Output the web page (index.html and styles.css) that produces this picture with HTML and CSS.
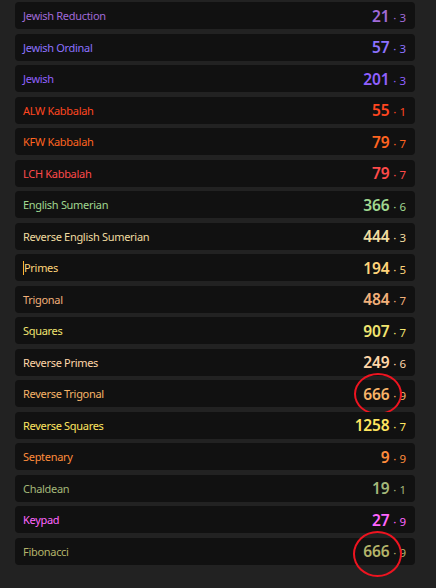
FILE: index.html
```html
<!DOCTYPE html>
<html lang="en">
<head>
    <meta charset="UTF-8">
    <meta name="viewport" content="width=device-width, initial-scale=1.0">
    <title>Ciphers</title>
    <link rel="stylesheet" href="styles.css">
</head>
<body>
    <div class="ciphers">
        <div class="row c-jred"><span class="name">Jewish Reduction</span><span class="val">21<small>· 3</small></span></div>
        <div class="row c-jord"><span class="name">Jewish Ordinal</span><span class="val">57<small>· 3</small></span></div>
        <div class="row c-jew"><span class="name">Jewish</span><span class="val">201<small>· 3</small></span></div>
        <div class="row c-alw"><span class="name">ALW Kabbalah</span><span class="val">55<small>· 1</small></span></div>
        <div class="row c-kfw"><span class="name">KFW Kabbalah</span><span class="val">79<small>· 7</small></span></div>
        <div class="row c-lch"><span class="name">LCH Kabbalah</span><span class="val">79<small>· 7</small></span></div>
        <div class="row c-es"><span class="name">English Sumerian</span><span class="val">366<small>· 6</small></span></div>
        <div class="row c-res"><span class="name">Reverse English Sumerian</span><span class="val">444<small>· 3</small></span></div>
        <div class="row c-pri"><span class="name"><span class="caret"></span>Primes</span><span class="val">194<small>· 5</small></span></div>
        <div class="row c-tri"><span class="name">Trigonal</span><span class="val">484<small>· 7</small></span></div>
        <div class="row c-sq"><span class="name">Squares</span><span class="val">907<small>· 7</small></span></div>
        <div class="row c-rpri"><span class="name">Reverse Primes</span><span class="val">249<small>· 6</small></span></div>
        <div class="row c-rtri"><span class="name">Reverse Trigonal</span><span class="val">666<small>· 9</small></span><span class="mark"></span></div>
        <div class="row c-rsq"><span class="name">Reverse Squares</span><span class="val">1258<small>· 7</small></span></div>
        <div class="row c-sep"><span class="name">Septenary</span><span class="val">9<small>· 9</small></span></div>
        <div class="row c-cha"><span class="name">Chaldean</span><span class="val">19<small>· 1</small></span></div>
        <div class="row c-key"><span class="name">Keypad</span><span class="val">27<small>· 9</small></span></div>
        <div class="row c-fib"><span class="name">Fibonacci</span><span class="val">666<small>· 9</small></span><span class="mark"></span></div>
    </div>
</body>
</html>
```
FILE: styles.css
```css
html, body {
    margin: 0;
    background: #222222;
}

body {
    font-family: "Noto Sans", "Open Sans", sans-serif;
    height: 588px;
    overflow: hidden;
}

.ciphers {
    width: 400px;
    margin-left: 15px;
    padding-top: 2px;
    display: flex;
    flex-direction: column;
    gap: 4.5px;
}

.row {
    position: relative;
    height: 27px;
    background: #111111;
    border-radius: 4px;
    display: flex;
    align-items: center;
    justify-content: space-between;
    padding: 0 9px 0 8px;
}

.name {
    font-size: 11px;
    letter-spacing: -0.3px;
    display: flex;
    align-items: center;
}

.val {
    font-size: 15.5px;
    font-weight: 600;
    letter-spacing: -0.2px;
}

.val small {
    font-size: 11.5px;
    font-weight: 400;
    margin-left: 4px;
    letter-spacing: 0;
}

.caret {
    display: inline-block;
    width: 1px;
    height: 14px;
    background: #ffb02e;
}

/* hand-drawn red circles */
.mark {
    position: absolute;
    left: 339px;
    top: -7px;
    width: 44px;
    height: 38px;
    border: 2px solid #ee1420;
    border-radius: 50%;
}

.c-fib .mark {
    left: 338px;
    top: -7px;
    height: 42px;
    width: 45px;
}

.c-jred { color: #a06ad8; }
.c-jord { color: #8c72ff; }
.c-jew  { color: #9060ff; }
.c-alw  { color: #ff4620; }
.c-kfw  { color: #ff6420; }
.c-lch  { color: #ff4a4a; }
.c-es   { color: #a0d890; }
.c-res  { color: #f0dca0; }
.c-pri  { color: #ffd47a; }
.c-tri  { color: #f2b07a; }
.c-sq   { color: #f0e470; }
.c-rpri { color: #ffd6a8; }
.c-rtri { color: #f8b468; }
.c-rsq  { color: #ffe660; }
.c-sep  { color: #ff8c3c; }
.c-cha  { color: #a4b87a; }
.c-key  { color: #ff66ff; }
.c-fib  { color: #b4b46a; }
```
